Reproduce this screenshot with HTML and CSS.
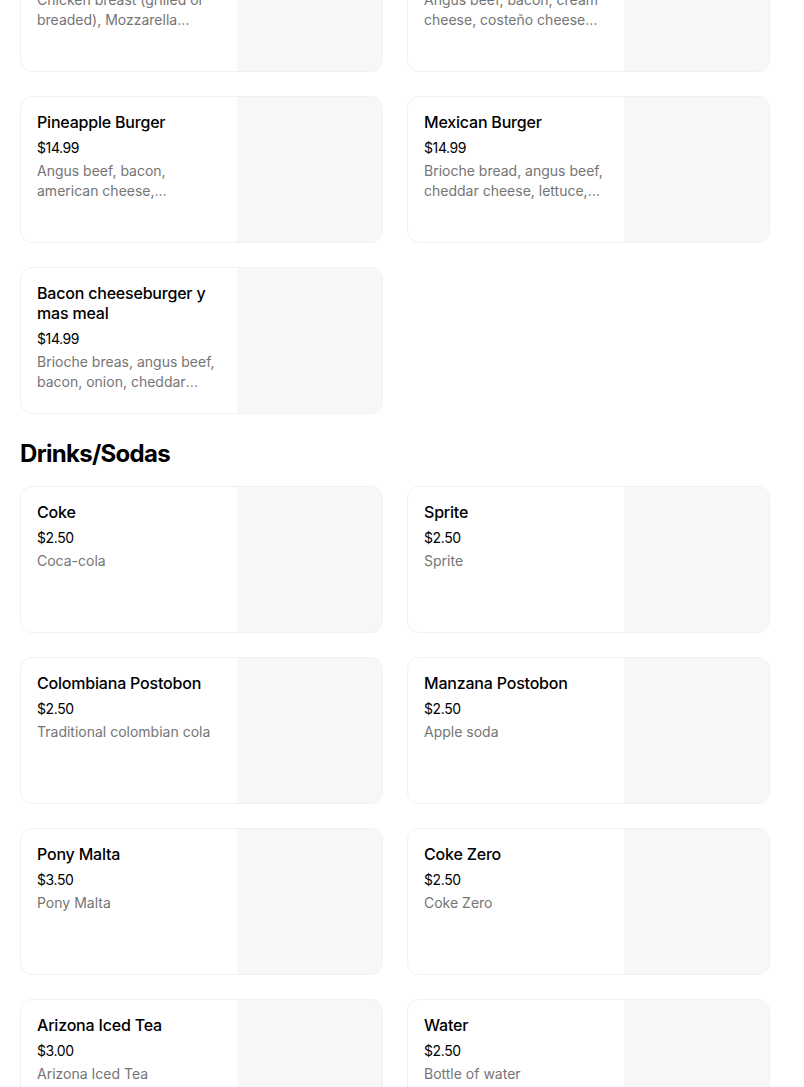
FILE: index.html
```html
<!DOCTYPE html>
<html lang="en">
<head>
<meta charset="utf-8">
<title>Menu</title>
<link rel="stylesheet" href="styles.css">
</head>
<body>
<main class="menu">
  <section class="section">
    <div class="grid">
      <div class="card">
        <div class="info">
          <div class="title">Chicken Burger</div>
          <div class="price">$14.99</div>
          <div class="desc">Chicken breast (grilled or breaded), Mozzarella cheese, lettuce, tomato and sauces</div>
        </div>
        <div class="thumb"></div>
      </div>
      <div class="card">
        <div class="info">
          <div class="title">Costeño Burger</div>
          <div class="price">$14.99</div>
          <div class="desc">Angus beef, bacon, cream cheese, costeño cheese and sweet plantain</div>
        </div>
        <div class="thumb"></div>
      </div>
      <div class="card">
        <div class="info">
          <div class="title">Pineapple Burger</div>
          <div class="price">$14.99</div>
          <div class="desc">Angus beef, bacon, american cheese, pineapple and sauces</div>
        </div>
        <div class="thumb"></div>
      </div>
      <div class="card">
        <div class="info">
          <div class="title">Mexican Burger</div>
          <div class="price">$14.99</div>
          <div class="desc">Brioche bread, angus beef, cheddar cheese, lettuce, jalapeños and guacamole</div>
        </div>
        <div class="thumb"></div>
      </div>
      <div class="card">
        <div class="info">
          <div class="title">Bacon cheeseburger y mas meal</div>
          <div class="price">$14.99</div>
          <div class="desc">Brioche breas, angus beef, bacon, onion, cheddar cheese, fries and soda</div>
        </div>
        <div class="thumb"></div>
      </div>
    </div>
  </section>
  <section class="section">
    <h2 class="heading">Drinks/Sodas</h2>
    <div class="grid">
      <div class="card">
        <div class="info">
          <div class="title">Coke</div>
          <div class="price">$2.50</div>
          <div class="desc">Coca-cola</div>
        </div>
        <div class="thumb"></div>
      </div>
      <div class="card">
        <div class="info">
          <div class="title">Sprite</div>
          <div class="price">$2.50</div>
          <div class="desc">Sprite</div>
        </div>
        <div class="thumb"></div>
      </div>
      <div class="card">
        <div class="info">
          <div class="title">Colombiana Postobon</div>
          <div class="price">$2.50</div>
          <div class="desc">Traditional colombian cola</div>
        </div>
        <div class="thumb"></div>
      </div>
      <div class="card">
        <div class="info">
          <div class="title">Manzana Postobon</div>
          <div class="price">$2.50</div>
          <div class="desc">Apple soda</div>
        </div>
        <div class="thumb"></div>
      </div>
      <div class="card">
        <div class="info">
          <div class="title">Pony Malta</div>
          <div class="price">$3.50</div>
          <div class="desc">Pony Malta</div>
        </div>
        <div class="thumb"></div>
      </div>
      <div class="card">
        <div class="info">
          <div class="title">Coke Zero</div>
          <div class="price">$2.50</div>
          <div class="desc">Coke Zero</div>
        </div>
        <div class="thumb"></div>
      </div>
      <div class="card">
        <div class="info">
          <div class="title">Arizona Iced Tea</div>
          <div class="price">$3.00</div>
          <div class="desc">Arizona Iced Tea</div>
        </div>
        <div class="thumb"></div>
      </div>
      <div class="card">
        <div class="info">
          <div class="title">Water</div>
          <div class="price">$2.50</div>
          <div class="desc">Bottle of water</div>
        </div>
        <div class="thumb"></div>
      </div>
    </div>
  </section>
</main>
</body>
</html>
```

FILE: styles.css
```css
html, body {
  margin: 0;
  padding: 0;
  background: #ffffff;
  overflow: hidden;
}

body {
  font-family: Inter, "Liberation Sans", Arial, sans-serif;
  color: #000000;
}

.menu {
  width: 750px;
  padding: 0 20px;
  margin-top: -75px;
}

.section {
  margin: 0;
}

.heading {
  margin: 24px 0 16px;
  font-size: 24px;
  line-height: 32px;
  font-weight: 700;
  letter-spacing: -0.7px;
  color: #000000;
}

.grid {
  display: grid;
  grid-template-columns: 363px 363px;
  column-gap: 24px;
  row-gap: 24px;
}

.card {
  display: flex;
  height: 147px;
  box-sizing: border-box;
  border: 1px solid #f1f1f1;
  border-radius: 12px;
  overflow: hidden;
  background: #ffffff;
}

.info {
  flex: 1;
  min-width: 0;
  padding: 15px 16px 16px 16px;
}

.thumb {
  width: 145px;
  flex: none;
  background: #f7f7f7;
}

.title {
  font-size: 16px;
  line-height: 20px;
  font-weight: 500;
  color: #000000;
  letter-spacing: -0.2px;
}

.price {
  margin-top: 6px;
  font-size: 14px;
  line-height: 20px;
  color: #000000;
  letter-spacing: -0.4px;
}

.desc {
  margin-top: 3px;
  font-size: 14px;
  line-height: 20px;
  color: #757575;
  display: -webkit-box;
  -webkit-line-clamp: 2;
  -webkit-box-orient: vertical;
  overflow: hidden;
}
```
